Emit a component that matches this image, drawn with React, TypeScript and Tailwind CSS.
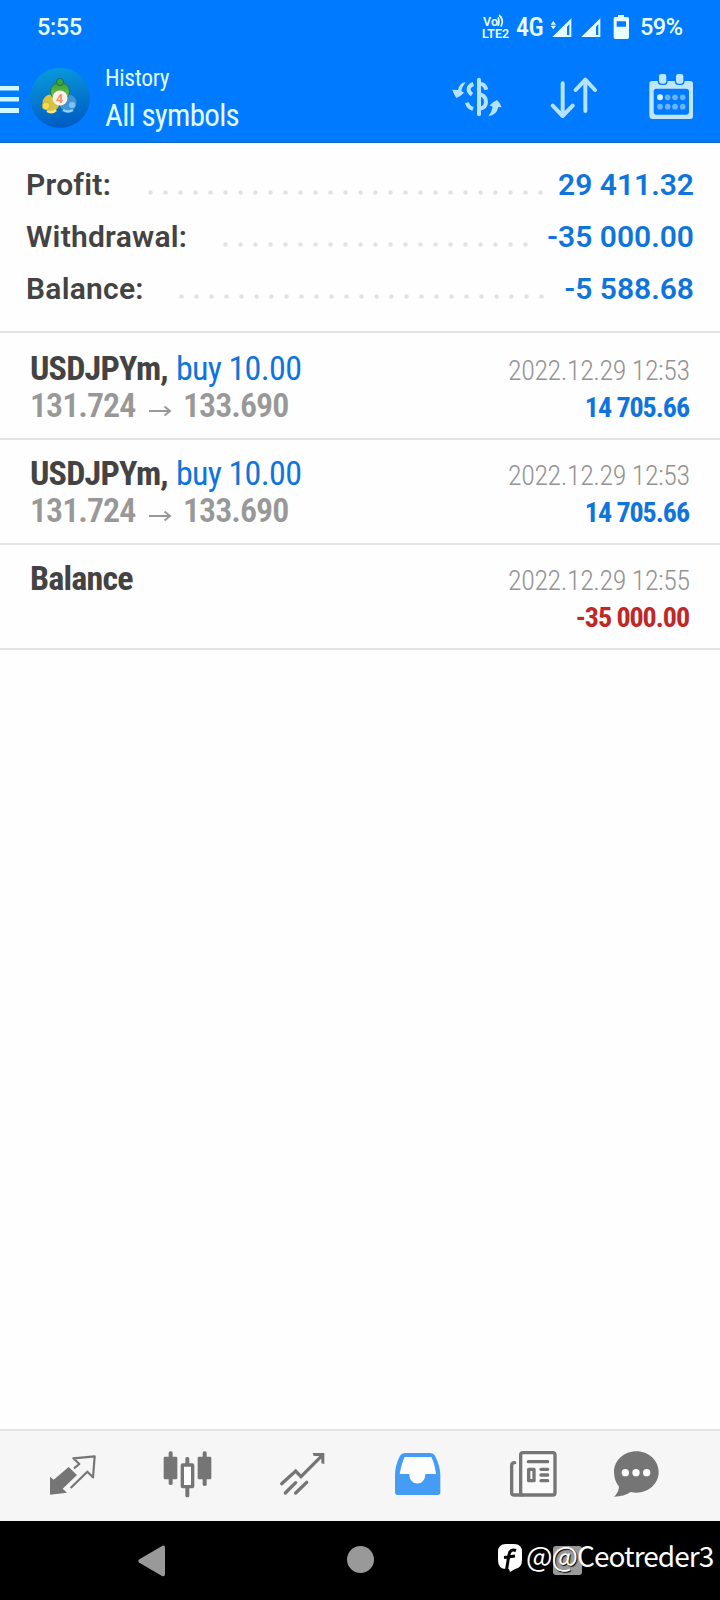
const condensed = "font-['Roboto_Condensed','Roboto',sans-serif]";

function StatusBar() {
  return (
    <div className="flex h-[54px] items-start pt-[13px] pl-[37px] text-[23.5px] leading-[28px] font-medium text-[#e8ffff]">
      <span className="w-[80px] tracking-[-0.4px]">5:55</span>
      <svg className="mt-px ml-[364px] h-[26px] w-[30px]" viewBox="0 0 30 26" fill="none" stroke="#e8ffff">
        <g fill="#e8ffff" stroke="none" fontFamily="Roboto, sans-serif" fontWeight="600">
          <text x="2" y="12" fontSize="12" textLength="15" lengthAdjust="spacingAndGlyphs">Vo</text>
          <text x="1" y="24" fontSize="12" textLength="27" lengthAdjust="spacingAndGlyphs">LTE2</text>
        </g>
        <path d="M17 3.500q2 4 0 8.500M18 1q5.500 5 2 11.500" strokeWidth="1.700" />
      </svg>
      <span className="ml-[5px] w-[28px] font-['Roboto_Condensed'] text-[26px] font-medium tracking-[-0.6px]">4G</span>
      <svg className="mt-[2px] ml-[5px] h-[24px] w-[83px]" viewBox="330 42 249 72" fill="#e8ffff">
        <path d="M343 60l8 11h-16zM343 85l8-11h-16z" />
        <path fillRule="evenodd" d="M397 52v56h-57zM391 69v33h-7v-25z" />
        <path fillRule="evenodd" d="M484 52v56h-57zM478 69v33h-7v-25z" />
        <path fillRule="evenodd" d="M537 42h18v6h10q5 0 5 5v56q0 5-5 5h-36q-5 0-5-5V53q0-5 5-5h8zM533 61v16h28V61z" />
      </svg>
      <span className="ml-[8px] tracking-[-0.5px]">59%</span>
    </div>
  );
}

function AppLogo() {
  return (
    <svg className="mt-[14px] ml-[10px] h-[60px] w-[60px]" viewBox="0 0 60 60">
      <defs>
        <linearGradient id="disc" x1="0" y1="0" x2="0.2" y2="1">
          <stop offset="0" stopColor="#0a9ddc" />
          <stop offset="1" stopColor="#005fc4" />
        </linearGradient>
        <linearGradient id="green" x1="0" y1="0" x2="0" y2="1">
          <stop offset="0" stopColor="#2f9a3a" />
          <stop offset="1" stopColor="#8ccf5c" />
        </linearGradient>
      </defs>
      <circle cx="30" cy="30" r="30" fill="url(#disc)" />
      <circle cx="21" cy="35" r="8.500" fill="#d6c244" />
      <circle cx="38" cy="35" r="8.500" fill="#4296d8" />
      <circle cx="30" cy="23.500" r="9.500" fill="url(#green)" stroke="#1c7440" strokeWidth="0.800" />
      <circle cx="30" cy="14" r="3.600" fill="#38a444" stroke="#14683c" strokeWidth="0.800" />
      <circle cx="16" cy="38" r="3.800" fill="#f6da4a" stroke="#b39a22" strokeWidth="0.500" />
      <path d="M17 43q5 3 9-1" stroke="#f4e68a" strokeWidth="2.500" fill="none" />
      <circle cx="42" cy="37" r="3.600" fill="#7cc4f8" stroke="#2a79bd" strokeWidth="0.500" />
      <path d="M33 42q5 3 10 0" stroke="#92d0fa" strokeWidth="2.500" fill="none" />
      <circle cx="30" cy="30" r="7.500" fill="#fff4e8" />
      <text x="29.500" y="34.500" textAnchor="middle" fontSize="12.500" fontWeight="700" fontFamily="Roboto, sans-serif" fill="#f0906a">4</text>
    </svg>
  );
}

function Header() {
  return (
    <header className="h-[143px] border-b border-[#1069c0] bg-[#007bff]">
      <StatusBar />
      <div className="flex items-start">
        <svg className="mt-[32px] h-[28px] w-[20px]" viewBox="0 0 20 28" fill="#d2f8ff">
          <path d="M0 0h19v4.500H0zM0 11h19v4.500H0zM0 22h19v5H0z" />
        </svg>
        <AppLogo />
        <div className={"mt-[10px] ml-[15px] w-[347px] text-[#e2fcff] " + condensed}>
          <div className="text-[23.5px] leading-[28px] tracking-[-0.3px]">History</div>
          <div className="mt-[5px] text-[31px] leading-[38px] tracking-[-0.7px]">All symbols</div>
        </div>
        <svg className="mt-[18px] h-[50px] w-[50px]" viewBox="36 216 150 150" fill="none" stroke="#b4e2ff">
          <path d="M117 239v104" strokeWidth="12" strokeLinecap="round" />
          <path d="M100 252q-14 5-14 16 0 9 10 16" strokeWidth="12" />
          <path d="M81 308q3 14 18 19" strokeWidth="12" />
          <path d="M120 252q14-1 19 17M120 283q18 5 18 22 0 19-20 21" strokeWidth="12" />
          <g fill="#b4e2ff" stroke="none">
            <path d="M77 247q-18 1-23 23l-17-1q5 15 12 25 13-5 23-16l-8-5q2-13 13-26z" />
            <path d="M145 348q25-2 30-27l10 1q-4-13-14-22-12 5-22 16l9 5q-2 14-13 27z" />
          </g>
        </svg>
        <svg className="mt-[18px] ml-[48px] h-[50px] w-[50px]" viewBox="330 216 150 150" fill="none" stroke="#b4e2ff" strokeWidth="12" strokeLinecap="round" strokeLinejoin="round">
          <path d="M368 250v96M338 317l30 31 30-31M436 333v-94M407 270l29-31 29 31" />
        </svg>
        <svg className="mt-[18px] ml-[48px] h-[50px] w-[50px]" viewBox="623 216 150 150" fill="#c0e6ff">
          <path fillRule="evenodd" d="M637 243h113q8 0 8 8v97q0 9-8 9H637q-10 0-10-9v-97q0-8 10-8zM648 266q-8 0-8 8v61q0 9 8 9h89q9 0 9-9v-61q0-8-9-8z" />
          <g stroke="#007bff" strokeWidth="4">
            <rect x="654" y="220" width="26" height="33" rx="9" />
            <rect x="705" y="220" width="26" height="33" rx="9" />
          </g>
          <circle cx="659" cy="292" r="9" fill="#d4f2ff" />
          <g fill="#68b4ff">
            <circle cx="682" cy="292" r="8.500" /><circle cx="704" cy="292" r="8.500" /><circle cx="727" cy="292" r="8.500" />
            <circle cx="659" cy="320" r="8.500" /><circle cx="682" cy="320" r="8.500" /><circle cx="704" cy="320" r="8.500" /><circle cx="727" cy="320" r="8.500" />
          </g>
        </svg>
      </div>
    </header>
  );
}

function SummaryRow({ label, labelWidth, value, dots }: { label: string; labelWidth: string; value: string; dots: number }) {
  return (
    <div className="flex h-[52px] text-[30px] leading-[52px]">
      <span className={"shrink-0 font-semibold tracking-[0.25px] text-[#434343] " + labelWidth}>{label}</span>
      <svg className="mt-[31px] h-[5px] shrink-0" style={{ width: dots * 15 }} fill="#e2e2e2">
        {Array.from({ length: dots }, (_, i) => (
          <circle key={i} cx={i * 15 + 7.5} cy="2.500" r="2.200" />
        ))}
      </svg>
      <span className="flex flex-1 justify-end font-semibold whitespace-nowrap text-[#0f75dc]">{value}</span>
    </div>
  );
}

function Row({ title, action, prices, date, amount, negative }: {
  title: string; action?: string; prices?: [string, string]; date: string; amount: string; negative?: boolean;
}) {
  return (
    <div className={"flex h-[105px] justify-between border-b-2 border-[#e3e3e3] pr-[30px] pl-[30px] " + condensed}>
      <div className="pt-[15px] text-[34px] leading-[37px]">
        <div>
          <span className="font-bold tracking-[-0.8px] text-[#434343]">{title}</span>
          {action && <span className="ml-[8px] tracking-[-0.65px] text-[#0f75dc]">{action}</span>}
        </div>
        {prices && (
          <div className="flex font-semibold tracking-[-1px] text-[#989898]">
            <span className="w-[104px]">{prices[0]}</span>
            <svg className="mt-[18px] ml-[15px] h-[12px] w-[23px]" viewBox="0 0 23 12" fill="none" stroke="#989898" strokeWidth="2">
              <path d="M0 6h21M15.500 1.500l5.500 4.500-5.500 4.500" />
            </svg>
            <span className="ml-[11px]">{prices[1]}</span>
          </div>
        )}
      </div>
      <div className="pt-[17px] text-right text-[28px] leading-[37px]">
        <div className="pr-[0.4px] font-[350] tracking-[-0.45px] text-[#949494]">{date}</div>
        <div className={"pr-px font-bold tracking-[-1.05px] " + (negative ? "text-[#c02828]" : "text-[#0f75dc]")}>{amount}</div>
      </div>
    </div>
  );
}

function TabBar() {
  return (
    <nav className="flex h-[92px] items-start border-t-2 border-[#e3e3e3] bg-[#f6f6f6] pt-[19px] pl-[48px]">
      <svg className="h-[50px] w-[50px]" viewBox="144 90 150 150" fill="#757575">
        <path d="M150 170l11 9 45-38 25 24-43 41 13 12-51 6z" />
        <path d="M222 145l16-13-18-17 64-6-5 63-17-17-50 49" fill="none" stroke="#757575" strokeWidth="6.500" strokeLinejoin="round" />
      </svg>
      <svg className="ml-[64px] h-[50px] w-[50px]" viewBox="486 90 150 150" fill="#757575">
        <rect x="491" y="110" width="41" height="68" rx="4" /><rect x="506" y="94" width="12" height="101" rx="5" />
        <rect x="593" y="110" width="41" height="68" rx="4" /><rect x="608" y="94" width="12" height="104" rx="5" />
        <rect x="556" y="111" width="12" height="121" rx="5" />
        <rect x="547" y="135" width="31" height="65" rx="1" fill="#fdfdfd" stroke="#757575" strokeWidth="10" />
      </svg>
      <svg className="ml-[65px] h-[50px] w-[50px]" viewBox="831 90 150 150" fill="none" stroke="#757575" strokeWidth="10" strokeLinecap="round">
        <path d="M845 191l42-38 16 17 63-63M856 219l31-31M887 219l33-32" />
        <path d="M938 99h35v33l-9-2v-14l-8-8h-15z" fill="#757575" stroke="none" />
      </svg>
      <svg className="ml-[65px] h-[50px] w-[50px]" viewBox="96 90 150 150">
        <path fill="#fdfdfd" d="M130 108h86l16 56-28 32h-60l-28-34z" />
        <path fill="#459cf5" fillRule="evenodd" d="M134 99h77q10 0 14 8 16 32 16 58v52q0 8-8 8H113q-8 0-8-8v-52q0-30 15-58 5-8 14-8zM134 111q-9 18-15 51h29c0 38 48 38 48 0h32q-4-32-14-51z" />
      </svg>
      <svg className="ml-[66px] h-[50px] w-[50px]" viewBox="444 90 150 150" fill="none" stroke="#757575" strokeWidth="10" strokeLinecap="round" strokeLinejoin="round">
        <path d="M464 128q-9 0-9 9v81q0 7 8 7h23" />
        <rect x="482" y="98" width="103" height="127" rx="7" fill="#fbfbfb" />
        <path d="M505 125h58M543 148h20M543 165h20M543 182h20" />
        <rect x="506" y="148" width="16" height="34" />
      </svg>
      <svg className="ml-[53px] h-[50px] w-[50px]" viewBox="753 90 150 150" fill="#757575">
        <path d="M829 94c37 0 67 27 67 62s-30 62-67 62q-9 0-17-2-20 14-50 14 14-13 15-30-15-18-15-44c0-35 30-62 67-62z" />
        <g fill="#fdfdfd"><circle cx="796" cy="158" r="11" /><circle cx="828" cy="158" r="11" /><circle cx="860" cy="158" r="11" /></g>
      </svg>
    </nav>
  );
}

function SystemNav() {
  return (
    <div className="relative flex h-[79px] items-start bg-black pl-[138px]">
      <svg className="mt-[24px] h-[32px] w-[27px]" viewBox="0 0 27 32" fill="#999">
        <path d="M1 14.500L24 1q3-1.500 3 2v26q0 3-3 2L1 17.500q-1.500-1.500 0-3z" />
      </svg>
      <div className="mt-[25px] ml-[182px] h-[27px] w-[27px] rounded-full bg-[#999]" />
      <div className="mt-[25px] ml-[179px] h-[29px] w-[29px] rounded-[3px] bg-[#999]" />
      <div className="absolute top-[17px] left-[497px] flex text-white">
        <svg className="mt-[5px] h-[30px] w-[26px]" viewBox="0 0 26 30">
          <path fill="#fff" d="M9 1h8q8 0 8 8v8q0 8-7 9l-5 3-1-3H9q-8 0-8-9V9q0-8 8-8z" />
          <path d="M19 7.500c-4-1.500-6 0-7 4L9.500 27M7 14.500l11-1.500" stroke="#000" strokeWidth="3" fill="none" />
        </svg>
        <span className="ml-[3px] font-['Noto_Sans_CJK_SC',sans-serif] text-[28px] leading-[34px] tracking-[-0.95px] whitespace-nowrap [text-shadow:1px_1px_1px_#000]">@@Ceotreder3</span>
      </div>
    </div>
  );
}

export default function App() {
  return (
    <div className="flex h-[1600px] w-[720px] flex-col overflow-hidden bg-[#fefefe] font-['Roboto',sans-serif]">
      <Header />
      <section className="border-b-2 border-[#e3e3e3] px-[26px] pt-[16px] pb-[16px]">
        <SummaryRow label="Profit:" labelWidth="w-[117px]" value="29 411.32" dots={27} />
        <SummaryRow label="Withdrawal:" labelWidth="w-[192px]" value="-35 000.00" dots={21} />
        <SummaryRow label="Balance:" labelWidth="w-[148px]" value="-5 588.68" dots={25} />
      </section>
      <main className="flex-1 pt-[2px]">
        <Row title="USDJPYm," action="buy 10.00" prices={["131.724", "133.690"]} date="2022.12.29 12:53" amount="14 705.66" />
        <Row title="USDJPYm," action="buy 10.00" prices={["131.724", "133.690"]} date="2022.12.29 12:53" amount="14 705.66" />
        <Row title="Balance" date="2022.12.29 12:55" amount="-35 000.00" negative />
      </main>
      <TabBar />
      <SystemNav />
    </div>
  );
}
